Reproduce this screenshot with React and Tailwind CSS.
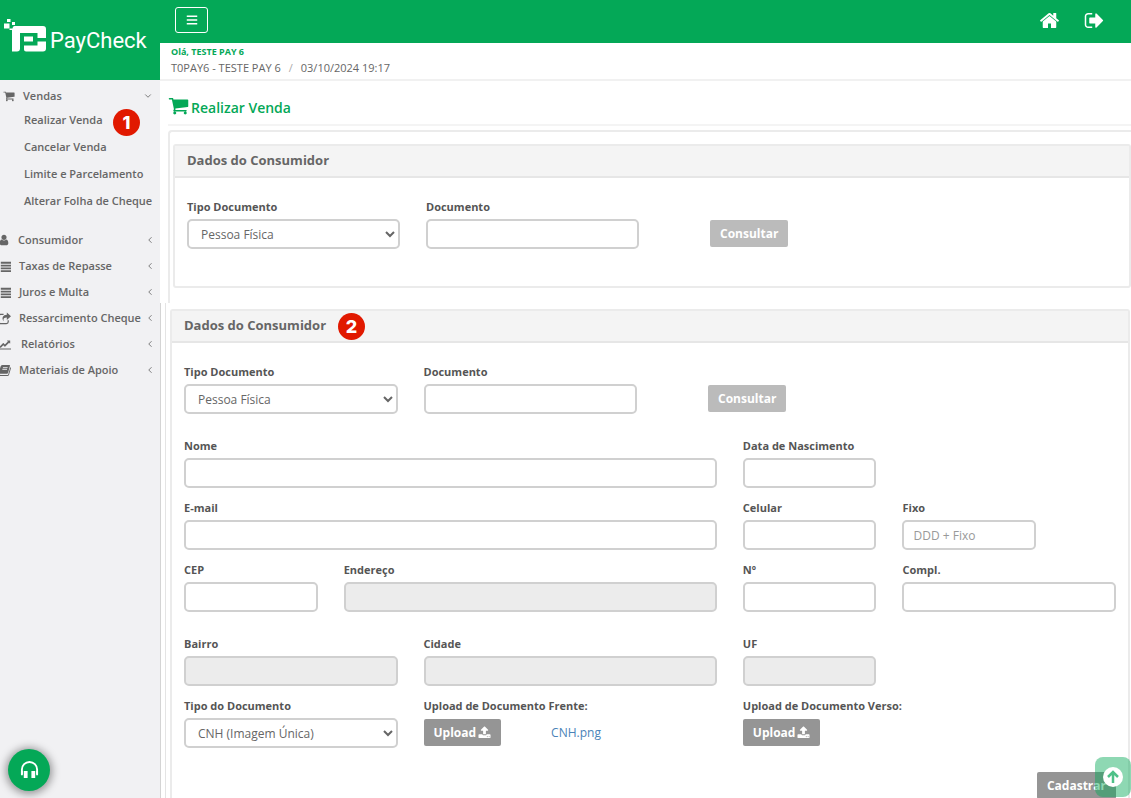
import React, { useState } from 'react'
import { FaBars } from 'react-icons/fa'
import { LuChevronDown, LuChevronLeft } from 'react-icons/lu'

const Icon = ({ children, viewBox = '0 0 1792 1792', className }) => (
    <svg
        viewBox={viewBox}
        className={className}
        fill="currentColor"
        aria-hidden="true"
    >
        {children}
    </svg>
)

const Icons = {
    cart: (props) => (
        <Icon {...props}>
            <path d="M704 1536q0 52-38 90t-90 38-90-38-38-90 38-90 90-38 90 38 38 90zm896 0q0 52-38 90t-90 38-90-38-38-90 38-90 90-38 90 38 38 90zm128-1088v512q0 24-16.5 42.5t-40.5 21.5l-1044 122q13 60 13 70 0 16-24 64h920q26 0 45 19t19 45-19 45-45 19h-1024q-26 0-45-19t-19-45q0-11 8-31.5t16-36 21.5-40 15.5-29.5l-177-823h-204q-26 0-45-19t-19-45 19-45 45-19h256q16 0 28.5 6.5t19.5 15.5 13 24.5 8 26 5.5 29.5 4.5 26h1201q26 0 45 19t19 45z" />
        </Icon>
    ),
    home: (props) => (
        <Icon {...props}>
            <path d="M1472 992v480q0 26-19 45t-45 19h-384v-384h-256v384h-384q-26 0-45-19t-19-45v-480q0-1 .5-3t.5-3l575-474 575 474q1 2 1 6zm223-69l-62 74q-8 9-21 11h-3q-13 0-21-7l-692-577-692 577q-12 8-24 7-13-2-21-11l-62-74q-8-10-7-23.5t11-21.5l719-599q32-26 76-26t76 26l244 204v-195q0-14 9-23t23-9h192q14 0 23 9t9 23v408l219 182q10 8 11 21.5t-7 23.5z" />
        </Icon>
    ),
    signOut: (props) => (
        <Icon {...props}>
            <path d="M704 1440q0 4 1 20t.5 26.5-3 23.5-10 19.5-20.5 6.5h-320q-119 0-203.5-84.5t-84.5-203.5v-704q0-119 84.5-203.5t203.5-84.5h320q13 0 22.5 9.5t9.5 22.5q0 4 1 20t.5 26.5-3 23.5-10 19.5-20.5 6.5h-320q-66 0-113 47t-47 113v704q0 66 47 113t113 47h312l11.5 1 11.5 3 8 5.5 7 9 2 13.5zm928-544q0 26-19 45l-544 544q-19 19-45 19t-45-19-19-45v-288h-448q-26 0-45-19t-19-45v-384q0-26 19-45t45-19h448v-288q0-26 19-45t45-19 45 19l544 544q19 19 19 45z" />
        </Icon>
    ),
    upload: (props) => (
        <Icon {...props}>
            <path d="M1344 1472q0-26-19-45t-45-19-45 19-19 45 19 45 45 19 45-19 19-45zm256 0q0-26-19-45t-45-19-45 19-19 45 19 45 45 19 45-19 19-45zm128-224v320q0 40-28 68t-68 28h-1472q-40 0-68-28t-28-68v-320q0-40 28-68t68-28h427q21 56 70.5 92t110.5 36h256q61 0 110.5-36t70.5-92h427q40 0 68 28t28 68zm-325-648q-17 40-59 40h-256v448q0 26-19 45t-45 19h-256q-26 0-45-19t-19-45v-448h-256q-42 0-59-40-17-39 14-69l448-448q18-19 45-19t45 19l448 448q31 30 14 69z" />
        </Icon>
    ),
    user: (props) => (
        <Icon {...props}>
            <path d="M1536 1399q0 109-62.5 187t-150.5 78h-854q-88 0-150.5-78t-62.5-187q0-85 8.5-160.5t31.5-152 58.5-131 94-89 134.5-34.5q131 128 313 128t313-128q76 0 134.5 34.5t94 89 58.5 131 31.5 152 8.5 160.5zm-256-887q0 159-112.5 271.5t-271.5 112.5-271.5-112.5-112.5-271.5 112.5-271.5 271.5-112.5 271.5 112.5 112.5 271.5z" />
        </Icon>
    ),
    list: (props) => (
        <Icon viewBox="0 0 14 14" {...props}>
            <path d="M0 2h2v2H0zM3 2h11v2H3zM0 5h2v2H0zM3 5h11v2H3zM0 8h2v2H0zM3 8h11v2H3zM0 11h2v2H0zM3 11h11v2H3z" />
        </Icon>
    ),
    share: (props) => (
        <Icon viewBox="0 0 14 14" {...props}>
            <path
                d="M6 2.5H3A2 2 0 0 0 1 4.500v6A2 2 0 0 0 3 12.500h6a2 2 0 0 0 2-2V9"
                fill="none"
                stroke="currentColor"
                strokeWidth="1.300"
            />
            <path d="M9.500 0.500 14 4.500 9.500 8.500V6C6.500 6 5.500 7 6 10 3.500 6.500 5.500 3 9.500 3z" />
        </Icon>
    ),
    chart: (props) => (
        <Icon viewBox="-128 0 2048 1792" {...props}>
            <path d="M1920 1536v128h-2048v-1536h128v1408h1920zm-128-1248v435q0 21-19.5 29.5t-35.5-7.5l-121-121-633 633q-10 10-23 10t-23-10l-233-233-416 416-192-192 585-585q10-10 23-10t23 10l233 233 464-464-121-121q-16-16-7.5-35.5t29.5-19.5h435q14 0 23 9t9 23z" />
        </Icon>
    ),
    book: (props) => (
        <Icon viewBox="0 0 14 14" {...props}>
            <path
                fillRule="evenodd"
                d="M5 1h7.200q1 0 .7 1l-2 7.500q-.3 1-1.300 1H2.500q-1 0-.7.8.2.500.8.500h7.600q.6 0 .8-.6L13.200 3.500q1 .4.700 1.300l-2.100 7q-.4 1.200-1.500 1.200H2.500Q.3 13 .2 10.800L2.900 2.500Q3.400 1 5 1zM5.500 3.200l-.3.900h5l.3-.9zM4.900 5.200l-.3.900h5l.3-.9z"
            />
        </Icon>
    ),
    headphones: (props) => (
        <Icon viewBox="0 0 20 18" {...props}>
            <path
                d="M2 14V9a8 8 0 0 1 16 0v5"
                fill="none"
                stroke="currentColor"
                strokeWidth="2"
            />
            <path d="M4 10.500h4V18H4zM12 10.500h4V18h-4zM1 10.500h2V15H1zM17 10.500h2V15h-2z" />
        </Icon>
    ),
    logo: (props) => (
        <Icon viewBox="0 0 44 34" {...props}>
            <path d="M0 4.500h5.500v5H0zM3 0h3.500v3H3zM8 3h3v3H8z" />
            <path d="M10.500 7H39a3 3 0 0 1 3 3v9h-8.500v-5H16v15.500a3 3 0 0 1-3 3H8V11H5.500V9.500h3Q8.500 7 10.500 7z" />
            <path d="M20 17.500h9v5h-9zM33.500 22.500H42v7a3 3 0 0 1-3 3H22a2 2 0 0 1-2-2v-4h13.500z" />
        </Icon>
    )
}

const SUBMENU = [
    'Realizar Venda',
    'Cancelar Venda',
    'Limite e Parcelamento',
    'Alterar Folha de Cheque'
]

const MENU = [
    { title: 'Consumidor', icon: Icons.user, gap: 'gap-2' },
    { title: 'Taxas de Repasse', icon: Icons.list, gap: 'gap-2' },
    { title: 'Juros e Multa', icon: Icons.list, gap: 'gap-2' },
    { title: 'Ressarcimento Cheque', icon: Icons.share, gap: 'gap-2' },
    { title: 'Relatórios', icon: Icons.chart, gap: 'gap-[10px]' },
    { title: 'Materiais de Apoio', icon: Icons.book, gap: 'gap-2' }
]

const Badge = ({ children, className = '' }) => (
    <span
        className={`flex size-[27px] items-center justify-center rounded-full bg-[#e11900] font-['Inter',sans-serif] text-[18px] font-extrabold text-white ${className}`}
    >
        {children}
    </span>
)

const CONTROL =
    'block h-[30px] w-full rounded-[5px] border-2 border-[#d0d0d0] text-xs text-[#666]'

const Field = ({ id, label, span, disabled, placeholder, options }) => (
    <div className={span}>
        <label htmlFor={id} className="mb-1 block text-[11px] leading-4 font-bold">
            {label}
        </label>
        {options ? (
            <select id={id} className={`${CONTROL} bg-white pl-2`}>
                {options.map((option) => (
                    <option key={option}>{option}</option>
                ))}
            </select>
        ) : (
            <input
                id={id}
                type="text"
                disabled={disabled}
                placeholder={placeholder}
                className={`${CONTROL} bg-white px-[9px] placeholder:text-[#999] disabled:bg-[#ececec]`}
            />
        )}
    </div>
)

const Button = ({ children, className = 'bg-[#959595]' }) => (
    <button
        type="button"
        className={`flex h-[27px] items-center justify-center gap-[2px] rounded-[2px] px-[10px] text-xs font-bold text-white ${className}`}
    >
        {children}
    </button>
)

const Upload = ({ id, label, span, file }) => (
    <div className={span}>
        <p id={id} className="mb-[5px] text-[11px] leading-4 font-bold whitespace-nowrap">
            {label}
        </p>
        <div className="flex items-center gap-[50px]">
            <Button>
                Upload
                <Icons.upload className="size-[13px]" />
            </Button>
            {file && (
                <a href="#" className="text-xs text-[#4a83b8]">
                    {file}
                </a>
            )}
        </div>
    </div>
)

const Row = ({ children, className = '' }) => (
    <div className={`grid grid-cols-12 gap-x-[26px] ${className}`}>{children}</div>
)

const Panel = ({ badge, children, className = '' }) => (
    <section className={`rounded-[3px] border-2 border-[#ebebeb] ${className}`}>
        <header className="flex h-8 items-center gap-3 border-b-2 border-[#e6e6e6] bg-[#f4f4f4] px-3">
            <h2 className="text-[13px] font-bold text-[#666]">Dados do Consumidor</h2>
            {badge && <Badge>{badge}</Badge>}
        </header>
        <div className="px-3 pt-[21px]">{children}</div>
    </section>
)

const Search = ({ prefix }) => (
    <Row>
        <Field
            id={`${prefix}-tipo`}
            label="Tipo Documento"
            span="col-span-3"
            options={['Pessoa Física', 'Pessoa Jurídica']}
        />
        <Field id={`${prefix}-documento`} label="Documento" span="col-span-3" />
        <div className="col-span-3 flex items-end pb-[2px] pl-[45px]">
            <Button className="bg-[#bbb]">Consultar</Button>
        </div>
    </Row>
)

const Sidebar = ({ open, setOpen }) => (
    <aside className="flex w-40 shrink-0 flex-col bg-[#f1f1f3] text-[11px] font-semibold text-[#666]">
        <a href="#" className="flex h-20 shrink-0 items-center bg-[#04a857] pb-2 pl-1 text-white">
            <Icons.logo className="h-[34px] w-11 shrink-0" />
            <span className="ml-[2px] pt-2 font-['Roboto',sans-serif] text-[22px] font-normal">
                PayCheck
            </span>
        </a>
        <nav className="pt-[5px]">
            <button
                type="button"
                className="flex h-[22px] w-full items-center pr-[7px] pl-[3px]"
                onClick={() => setOpen(!open)}
            >
                <Icons.cart className="size-3" />
                <span className="ml-2">Vendas</span>
                <LuChevronDown className="ml-auto size-[10px]" strokeWidth={2} />
            </button>
            {open && (
                <ul className="mb-3">
                    {SUBMENU.map((title, i) => (
                        <li key={title} className="relative flex h-[27px] items-center pl-6">
                            <a href="#" className="whitespace-nowrap">
                                {title}
                            </a>
                            {i === 0 && <Badge className="absolute top-[2px] left-[113px]">1</Badge>}
                        </li>
                    ))}
                </ul>
            )}
            <ul>
                {MENU.map(({ title, icon: MenuIcon, gap }) => (
                    <li key={title}>
                        <a href="#" className="flex h-[26px] items-center justify-between pr-[5px]">
                            <span className={`flex items-center whitespace-nowrap ${gap}`}>
                                <MenuIcon
                                    className={`-ml-[2px] shrink-0 ${
                                        title === 'Consumidor' ? 'size-3' : 'size-[13px]'
                                    }`}
                                />
                                {title}
                            </span>
                            <LuChevronLeft className="size-[10px] shrink-0" strokeWidth={2} />
                        </a>
                    </li>
                ))}
            </ul>
        </nav>
    </aside>
)

export default function App() {
    const [open, setOpen] = useState(true)

    return (
        <div className="flex h-screen overflow-hidden bg-white font-['Open_Sans',sans-serif] text-[#555]">
            <Sidebar open={open} setOpen={setOpen} />

            <div className="flex min-w-0 flex-1 flex-col">
                <header className="flex h-[43px] shrink-0 items-center justify-between bg-[#04a857] pr-[26px] pb-[3px] pl-[15px] text-white">
                    <button
                        type="button"
                        aria-label="Menu"
                        className="flex h-[26px] w-[33px] items-center justify-center rounded-[3px] border border-white"
                    >
                        <FaBars className="size-3" />
                    </button>
                    <div className="flex items-center gap-6">
                        <a href="#" aria-label="Início">
                            <Icons.home className="size-[21px]" />
                        </a>
                        <a href="#" aria-label="Sair">
                            <Icons.signOut className="size-[21px]" />
                        </a>
                    </div>
                </header>

                <div className="h-[38px] shrink-0 border-b-2 border-[#f1f1f1] pt-[3px] pl-[11px]">
                    <p className="text-[9px] leading-3 font-bold text-[#04a857]">Olá, TESTE PAY 6</p>
                    <p className="flex gap-2 text-[11px] leading-5 text-[#666]">
                        <span>T0PAY6 - TESTE PAY 6</span>
                        <span className="text-[#aaa]">/</span>
                        <span>03/10/2024 19:17</span>
                    </p>
                </div>

                <main className="flex min-h-0 flex-1 flex-col overflow-y-auto [scrollbar-width:none]">
                    <h1 className="ml-2 flex h-[45px] shrink-0 items-center gap-[2px] border-b-2 border-[#f4f4f4] pt-[10px] text-sm font-semibold text-[#04a857]">
                        <Icons.cart className="mb-1 size-[21px]" />
                        Realizar Venda
                    </h1>

                    <div className="mt-1 ml-2 h-[173px] shrink-0 rounded-tl-[4px] border-t-2 border-l-2 border-[#ebebeb] pt-3 pl-[3px]">
                        <Panel className="pb-[37px]">
                            <Search prefix="busca" />
                        </Panel>
                    </div>

                    <div className="flex shrink-0 flex-1 border-l border-[#d4d4d4]">
                        <div className="ml-1 flex-1 border-l border-[#e4e4e4] pt-[6px] pr-[1px] pl-1">
                            <Panel badge="2" className="pb-6">
                                <div className="flex flex-col gap-y-3">
                                    <Search prefix="cadastro" />
                                    <Row className="mt-3">
                                        <Field id="nome" label="Nome" span="col-span-7" />
                                        <Field id="nascimento" label="Data de Nascimento" span="col-span-2" />
                                    </Row>
                                    <Row>
                                        <Field id="email" label="E-mail" span="col-span-7" />
                                        <Field id="celular" label="Celular" span="col-span-2" />
                                        <Field id="fixo" label="Fixo" span="col-span-2" placeholder="DDD + Fixo" />
                                    </Row>
                                    <Row>
                                        <Field id="cep" label="CEP" span="col-span-2" />
                                        <Field id="endereco" label="Endereço" span="col-span-5" disabled />
                                        <Field id="numero" label="Nº" span="col-span-2" />
                                        <Field id="compl" label="Compl." span="col-span-3" />
                                    </Row>
                                    <Row className="mt-3">
                                        <Field id="bairro" label="Bairro" span="col-span-3" disabled />
                                        <Field id="cidade" label="Cidade" span="col-span-4" disabled />
                                        <Field id="uf" label="UF" span="col-span-2" disabled />
                                    </Row>
                                    <Row>
                                        <Field
                                            id="tipo-doc"
                                            label="Tipo do Documento"
                                            span="col-span-3"
                                            options={['CNH (Imagem Única)', 'RG']}
                                        />
                                        <Upload
                                            id="frente"
                                            label="Upload de Documento Frente:"
                                            span="col-span-4"
                                            file="CNH.png"
                                        />
                                        <Upload id="verso" label="Upload de Documento Verso:" span="col-span-3" />
                                    </Row>
                                    <div className="mt-3 flex justify-end">
                                        <Button>Cadastrar</Button>
                                    </div>
                                </div>
                            </Panel>
                        </div>
                    </div>
                </main>
            </div>

            <button
                type="button"
                aria-label="Atendimento"
                className="fixed bottom-[7px] left-2 flex size-[42px] items-center justify-center rounded-full bg-[#04a857] text-white shadow-[0_1px_8px_2px_rgba(0,0,0,0.4)]"
            >
                <Icons.headphones className="w-[19px]" />
            </button>
            <button
                type="button"
                aria-label="Voltar ao topo"
                className="fixed right-0 bottom-[1px] flex h-10 w-9 items-center justify-center rounded-[8px] bg-[#04a857]/45"
            >
                <span className="flex size-5 items-center justify-center rounded-full bg-white text-[#4fc188]">
                    <svg viewBox="0 0 14 14" className="size-[14px]" fill="none" stroke="currentColor" strokeWidth="2.500">
                        <path d="M7 13V2M2 7l5-5 5 5" />
                    </svg>
                </span>
            </button>
        </div>
    )
}
